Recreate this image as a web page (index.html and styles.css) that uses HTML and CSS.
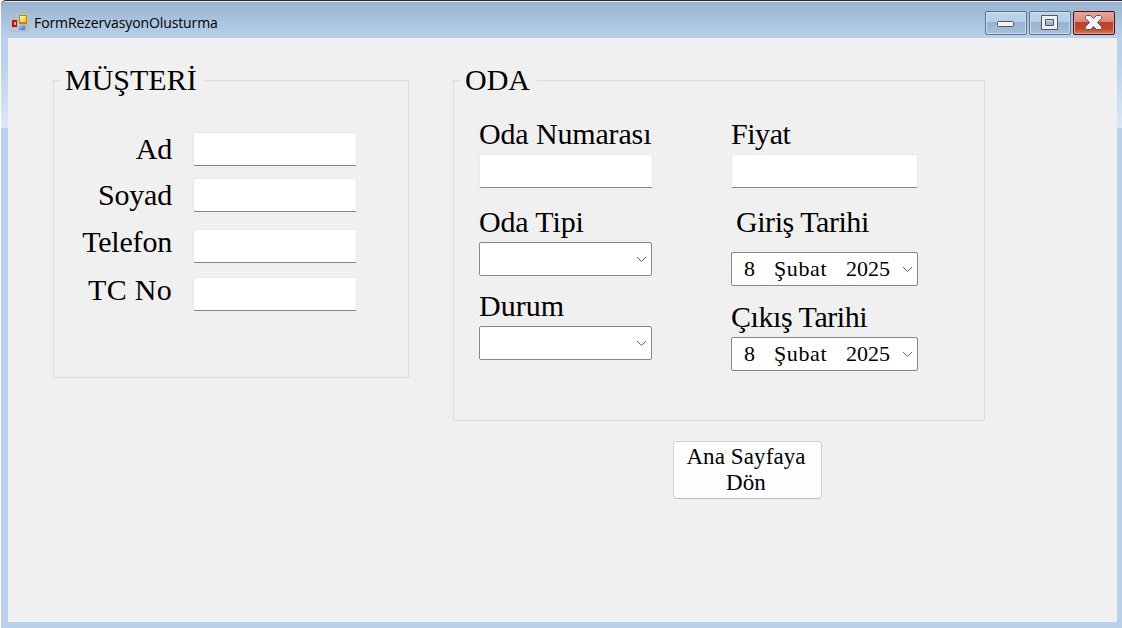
FILE: index.html
```html
<!DOCTYPE html>
<html lang="tr">
<head>
<meta charset="utf-8">
<title>FormRezervasyonOlusturma</title>
<link rel="stylesheet" href="styles.css">
</head>
<body>
<div class="window">
  <header class="titlebar">
    <svg class="app-icon" width="18" height="18" viewBox="0 0 18 18" shape-rendering="crispEdges">
      <defs>
        <linearGradient id="gold" x1="0" y1="0" x2="1" y2="1"><stop offset="0" stop-color="#fff3b0"/><stop offset="1" stop-color="#f5c518"/></linearGradient>
        <linearGradient id="sky" x1="0" y1="0" x2="1" y2="1"><stop offset="0" stop-color="#a9cdfb"/><stop offset="1" stop-color="#2f6be0"/></linearGradient>
      </defs>
      <rect width="18" height="18" fill="#b9bfc6"/>
      <rect x="1" y="1" width="5" height="4" fill="#a9bfd8"/>
      <rect x="1" y="14" width="6" height="3" fill="#b4c8de"/>
      <rect x="1" y="6" width="5" height="7" fill="#b3150b"/>
      <rect x="3" y="8" width="2" height="3" fill="#f2a497"/>
      <rect x="8" y="1" width="8" height="9" fill="#b98a0c"/>
      <rect x="9" y="2" width="6" height="6" fill="url(#gold)"/>
      <rect x="8" y="11" width="6" height="5" fill="url(#sky)"/>
    </svg>
    <span class="title">FormRezervasyonOlusturma</span>
    <div class="controls">
      <button class="control" aria-label="Simge durumuna küçült">
        <svg width="42" height="24" viewBox="0 0 42 24"><rect x="12.5" y="10.5" width="16" height="5" rx="1" fill="#f4f4f4" stroke="#535666"/></svg>
      </button>
      <button class="control" aria-label="Ekranı kapla">
        <svg width="42" height="24" viewBox="0 0 42 24"><path d="M12.500 4.500h16v14h-16zM16.500 8.500v6h8v-6z" fill="#f0f0f0" fill-rule="evenodd" stroke="#535666" stroke-linejoin="round"/></svg>
      </button>
      <button class="control close" aria-label="Kapat">
        <svg width="42" height="24" viewBox="0 0 42 24"><path d="M13.500 4.500h4l3 3 3-3h4l1 1v2l-4 4 4 4v2l-1 1h-4l-3-3-3 3h-4l-1-1v-2l4-4-4-4v-2z" fill="#f4f4f4" stroke="#535666" stroke-linejoin="round"/></svg>
      </button>
    </div>
  </header>
  <main class="client">
    <fieldset class="group customer">
      <legend>MÜŞTERİ</legend>
      <div class="row"><label for="ad">Ad</label><input id="ad" class="text"></div>
      <div class="row"><label for="soyad">Soyad</label><input id="soyad" class="text"></div>
      <div class="row raised"><label for="tel">Telefon</label><input id="tel" class="text"></div>
      <div class="row raised last"><label for="tc">TC No</label><input id="tc" class="text"></div>
    </fieldset>
    <div class="side">
      <fieldset class="group room">
        <legend>ODA</legend>
        <div class="columns">
          <div class="column">
            <label for="no">Oda Numarası</label>
            <input id="no" class="text">
            <label class="type">Oda Tipi</label>
            <div class="combo"><svg class="chevron" width="11" height="7" viewBox="0 0 11 7"><path d="M1 1l4.500 4.500L10 1"/></svg></div>
            <label class="status">Durum</label>
            <div class="combo"><svg class="chevron" width="11" height="7" viewBox="0 0 11 7"><path d="M1 1l4.500 4.500L10 1"/></svg></div>
          </div>
          <div class="column dates">
            <label for="fiyat">Fiyat</label>
            <input id="fiyat" class="text">
            <label class="checkin">Giriş Tarihi</label>
            <div class="combo date"><span class="day">8</span><span class="month">Şubat</span><span>2025</span><svg class="chevron" width="11" height="7" viewBox="0 0 11 7"><path d="M1 1l4.500 4.500L10 1"/></svg></div>
            <label class="checkout">Çıkış Tarihi</label>
            <div class="combo date"><span class="day">8</span><span class="month">Şubat</span><span>2025</span><svg class="chevron" width="11" height="7" viewBox="0 0 11 7"><path d="M1 1l4.500 4.500L10 1"/></svg></div>
          </div>
        </div>
      </fieldset>
      <button class="home">Ana Sayfaya<br>Dön</button>
    </div>
  </main>
</div>
</body>
</html>
```
FILE: styles.css
```css
* { box-sizing: border-box; }

body {
  margin: 0;
  overflow: hidden;
  background: #fff;
  color: #000;
  font: 30px/34px "Liberation Serif", "Times New Roman", serif;
}

.window {
  height: 628px;
  padding: 0 5px 6px 7px;
  margin-left: 1px;
  border-top: 1px solid #2b2830;
  border-top-left-radius: 5px;
  background: linear-gradient(#e4edf7 0 1px, #99b4d1 1px, #b9d1ea 37px, #b9d1ea 60px, #dce8f5 127px, #b9d1ea 127px);
}

.titlebar {
  display: flex;
  height: 37px;
  padding: 10px 2px 0 3px;
}

.app-icon { margin-top: 3px; }

.title {
  margin: 3px 0 0 5px;
  font: 14px/18px "Open Sans", sans-serif;
  letter-spacing: -0.1px;
}

.controls {
  display: flex;
  gap: 2px;
  margin-left: auto;
}

.control {
  width: 42px;
  height: 24px;
  padding: 0;
  border: 1px solid #5d7491;
  border-radius: 2px;
  background: linear-gradient(#c1d5e9, #b6cde5 10px, #98b1ce 10px, #a6c0dc);
  box-shadow: inset 0 0 0 1px #c9dcf0;
}

.control svg { display: block; margin: -1px; }

.close {
  border-color: #45121c;
  background: linear-gradient(#eaa99e, #d98577 10px, #b8402a 10px, #c2492f 17px, #d97a60);
  box-shadow: inset 0 0 0 1px #e5a196;
}

.client {
  display: flex;
  align-items: flex-start;
  gap: 44px;
  height: 584px;
  padding: 26px 0 0 45px;
  background: #f0f0f0;
}

.group {
  min-width: 0;
  margin: 0;
  border: 1px solid #dcdcdc;
}

.group legend {
  height: 33px;
  padding: 0 7px 0 5px;
  line-height: 31px;
}

.customer {
  width: 356px;
  height: 314px;
  padding: 35px 51px 0 0;
}

.customer legend { margin-left: 6px; }

.row {
  display: flex;
  justify-content: flex-end;
  gap: 21px;
  height: 34px;
  margin-bottom: 12px;
}

.row label { letter-spacing: -0.2px; }
.row.raised { margin: 17px 0 14px; }
.row.raised.last { margin: 0; }
.raised label { margin-top: -4px; }
.last label { letter-spacing: 0.3px; }

.text {
  width: 164px;
  height: 34px;
  padding: 0 4px;
  border: 1px solid #e8e8e8;
  border-bottom-color: #868686;
  border-radius: 2px;
  outline: 0;
  background: #fff;
  font: inherit;
}

.room {
  width: 532px;
  height: 357px;
  padding: 20px 0 0 25px;
}

.room legend { margin-left: -19px; }

.columns { display: flex; gap: 78px; }

.column {
  display: flex;
  flex-direction: column;
  width: 174px;
}

.column label {
  height: 34px;
  margin-bottom: 3px;
  letter-spacing: -0.15px;
  white-space: nowrap;
}

.column .text { width: 100%; }
.column .type { margin-top: 17px; }
.column .status { margin-top: 13px; letter-spacing: 0; }
.column.dates { width: 187px; }
.column.dates label { letter-spacing: -0.45px; }
.column .checkin { margin: 17px 0 13px 5px; }
.column .checkout { margin-top: 14px; }

.combo {
  display: flex;
  align-items: center;
  width: 173px;
  height: 34px;
  padding: 0 4px 0 12px;
  border: 1px solid #868686;
  border-radius: 2px;
  background: #fff;
  font-size: 22px;
  line-height: 32px;
}

.date { width: 187px; }
.day { width: 30px; }
.month { width: 72px; letter-spacing: 0.6px; }

.chevron {
  margin-left: auto;
  fill: none;
  stroke: #606060;
}

.home {
  display: block;
  width: 149px;
  height: 58px;
  margin: 20px 0 0 220px;
  padding: 0 3px 0 0;
  border: 1px solid #d0d0d0;
  border-bottom-color: #bcbcbc;
  border-radius: 4px;
  background: #fdfdfd;
  color: #000;
  font: 23px/26px "Liberation Serif", "Times New Roman", serif;
  letter-spacing: 0.1px;
}
```
